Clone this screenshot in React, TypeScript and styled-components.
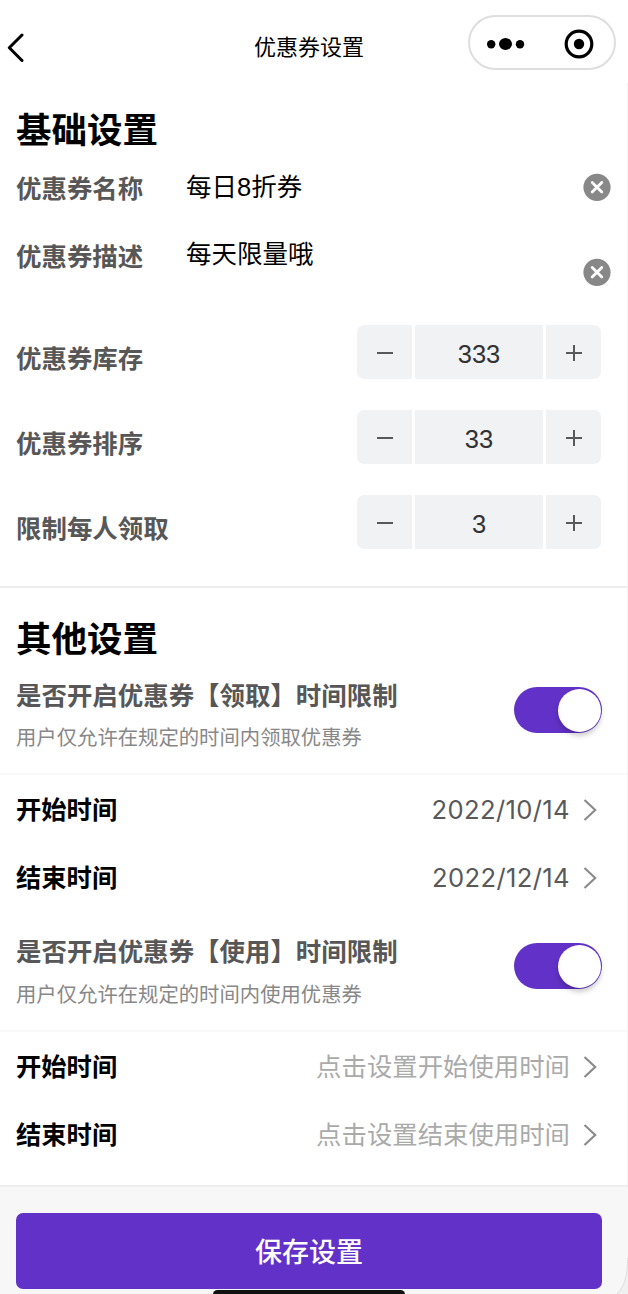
import React, { useState } from "react";
import styled, { createGlobalStyle } from "styled-components";

const GlobalStyle = createGlobalStyle`
  * { box-sizing: border-box; }
  body {
    margin: 0;
    background: #fff;
    color: #000;
    font-family: "Liberation Sans", "Noto Sans CJK SC", sans-serif;
  }
  button { font: inherit; border: 0; padding: 0; margin: 0; background: none; color: inherit; cursor: pointer; }
`;

const Page = styled.div`
  position: relative;
  width: 628px;
  height: 1294px;
  overflow: hidden;
  display: flex;
  flex-direction: column;
  background: #fff;
`;

const NavBar = styled.header`
  flex: none;
  height: 83px;
  display: grid;
  grid-template-columns: 148px 1fr 148px;
  align-items: start;
  padding: 15px 12px 0 7px;
`;

const BackButton = styled.button`
  width: 18px;
  height: 30px;
  margin-top: 18px;
  svg { display: block; }
`;

const NavTitle = styled.h1`
  margin: 16px 0 0 -5px;
  font-size: 22px;
  line-height: 34px;
  font-weight: 400;
  text-align: center;
`;

const Capsule = styled.div`
  width: 148px;
  height: 55px;
  border: 2px solid #dedede;
  border-radius: 28px;
  display: flex;
  align-items: center;
  justify-content: space-between;
  padding: 2px 20px 0 17px;
`;

const Panel = styled.section`
  flex: none;
  display: flex;
  flex-direction: column;
  border-right: 1px solid #f4f4f4;
`;

const BasicPanel = styled(Panel)`
  height: 505px;
  border-bottom: 2px solid #ededed;
`;

const OtherPanel = styled(Panel)`
  height: 597px;
`;

const Heading = styled.h2<{ $height: number; $top: number }>`
  margin: 0;
  padding: ${(p) => p.$top}px 0 0 16px;
  height: ${(p) => p.$height}px;
  font-size: 35.5px;
  line-height: 52px;
  font-weight: 700;
`;

const FieldRow = styled.div<{ $height: number }>`
  height: ${(p) => p.$height}px;
  display: flex;
  padding: 0 16px;
`;

const Label = styled.span<{ $top?: number }>`
  padding-top: ${(p) => p.$top ?? 0}px;
  width: 170px;
  font-size: 25.45px;
  line-height: 38px;
  font-weight: 700;
  color: #575757;
`;

const FieldValue = styled.span<{ $top: number }>`
  flex: 1;
  padding-top: ${(p) => p.$top}px;
  font-size: 25.5px;
  line-height: 38px;
`;

const ClearButton = styled.button<{ $top: number }>`
  width: 28px;
  height: 28px;
  margin-top: ${(p) => p.$top}px;
  svg { display: block; }
`;

const StepperRow = styled.div`
  height: 85px;
  display: flex;
  justify-content: space-between;
  padding: 15px 26px 0 16px;
`;

const Stepper = styled.div`
  width: 244px;
  height: 54px;
  display: grid;
  grid-template-columns: 55px 128px 55px;
  column-gap: 3px;
  border-radius: 7px;
  overflow: hidden;
`;

const StepCell = styled.div`
  display: flex;
  align-items: center;
  justify-content: center;
  background: #f1f2f4;
`;

const StepButton = styled(StepCell).attrs({ as: "button" })`
  padding-top: 2px;
  svg { display: block; }
`;

const StepValue = styled(StepCell)`
  padding-top: 5px;
  font-size: 25.5px;
  color: #323233;
`;

const SwitchRow = styled.div<{ $height: number; $top: number }>`
  height: ${(p) => p.$height}px;
  display: flex;
  justify-content: space-between;
  padding: ${(p) => p.$top}px 25px 0 16px;
  border-bottom: 2px solid #f8f8f8;
`;

const SwitchText = styled.div`
  display: flex;
  flex-direction: column;
`;

const SwitchTitle = styled.span`
  font-size: 25.45px;
  line-height: 38px;
  font-weight: 700;
  color: #575757;
`;

const SwitchHint = styled.span<{ $gap: number }>`
  margin-top: ${(p) => p.$gap}px;
  font-size: 20.35px;
  line-height: 30px;
  color: #888;
`;

const Track = styled.button<{ $on: boolean }>`
  width: 88px;
  height: 46px;
  margin-top: 10px;
  padding: 1.5px;
  border-radius: 23px;
  display: flex;
  justify-content: ${(p) => (p.$on ? "flex-end" : "flex-start")};
  background: ${(p) => (p.$on ? "#6231c8" : "#ddd")};
`;

const Knob = styled.span`
  width: 43px;
  height: 43px;
  border-radius: 50%;
  background: #fff;
  box-shadow: 0 4px 5px rgba(0, 0, 0, 0.2);
`;

const DateRow = styled.div`
  height: 68px;
  display: flex;
  align-items: center;
  padding: 2px 30px 0 16px;
`;

const DateLabel = styled.span`
  flex: 1;
  font-size: 25.3px;
  line-height: 38px;
  font-weight: 700;
`;

const DateValue = styled.span<{ $empty: boolean }>`
  margin-right: 13px;
  line-height: 38px;
  color: ${(p) => (p.$empty ? "#aaa" : "#595959")};
  font-family: ${(p) => (p.$empty ? "inherit" : '"Inter", "Liberation Sans", sans-serif')};
  font-size: ${(p) => (p.$empty ? 25.4 : 25.6)}px;
  letter-spacing: ${(p) => (p.$empty ? 0 : 0.35)}px;
`;

const Footer = styled.footer`
  flex: 1;
  border-top: 2px solid #eee;
  background: #f7f7f7;
  padding: 26px 26px 0 16px;
`;

const SaveButton = styled.button`
  width: 586px;
  height: 76px;
  border-radius: 7px;
  background: #6231c8;
  color: #fff;
  font-size: 27px;
  line-height: 76px;
  font-weight: 500;
  text-align: center;
  padding-top: 2px;
`;

const HomeIndicator = styled.div`
  position: absolute;
  left: 213px;
  bottom: -5px;
  width: 192px;
  height: 9px;
  border-radius: 5px;
  background: #111;
`;

const ScreenCorner = styled.svg`
  position: absolute;
  right: 0;
  bottom: 0;
`;

const ClearIcon = () => (
  <svg width="28" height="28" viewBox="0 0 28 28">
    <circle cx="14" cy="14.3" r="13.6" fill="#888" />
    <path d="M9.2 9.5l9.6 9.6M18.8 9.5l-9.6 9.6" stroke="#fff" strokeWidth="2.8" strokeLinecap="round" />
  </svg>
);

const StepIcon = ({ plus }: { plus?: boolean }) => (
  <svg width="16" height="16" viewBox="0 0 16 16" stroke="#58595b" strokeWidth="2">
    <path d={plus ? "M0 8h16M8 0v16" : "M0 8h16"} />
  </svg>
);

const Arrow = () => (
  <svg width="14" height="24" viewBox="0 0 14 24" fill="none" stroke="#8c8c8c" strokeWidth="2.2">
    <path d="M1.5 2L12.2 12L1.5 22" />
  </svg>
);

function StepperField({ label, initial }: { label: string; initial: number }) {
  const [value, setValue] = useState(initial);
  return (
    <StepperRow>
      <Label $top={15}>{label}</Label>
      <Stepper>
        <StepButton onClick={() => setValue(Math.max(0, value - 1))}><StepIcon /></StepButton>
        <StepValue>{value}</StepValue>
        <StepButton onClick={() => setValue(value + 1)}><StepIcon plus /></StepButton>
      </Stepper>
    </StepperRow>
  );
}

interface TextFieldProps {
  label: string;
  initial: string;
  height: number;
  valueTop: number;
  iconTop: number;
}

function TextField({ label, initial, height, valueTop, iconTop }: TextFieldProps) {
  const [value, setValue] = useState(initial);
  return (
    <FieldRow $height={height}>
      <Label $top={16}>{label}</Label>
      <FieldValue $top={valueTop}>{value}</FieldValue>
      <ClearButton $top={iconTop} onClick={() => setValue("")}><ClearIcon /></ClearButton>
    </FieldRow>
  );
}

function SwitchField(props: { title: string; hint: string; height: number; top: number; gap: number }) {
  const [on, setOn] = useState(true);
  return (
    <SwitchRow $height={props.height} $top={props.top}>
      <SwitchText>
        <SwitchTitle>{props.title}</SwitchTitle>
        <SwitchHint $gap={props.gap}>{props.hint}</SwitchHint>
      </SwitchText>
      <Track $on={on} onClick={() => setOn(!on)}><Knob /></Track>
    </SwitchRow>
  );
}

function DateField({ label, value, placeholder = "" }: { label: string; value?: string; placeholder?: string }) {
  return (
    <DateRow>
      <DateLabel>{label}</DateLabel>
      <DateValue $empty={!value}>{value ?? placeholder}</DateValue>
      <Arrow />
    </DateRow>
  );
}

export default function App() {
  return (
    <>
      <GlobalStyle />
      <Page>
        <NavBar>
          <BackButton>
            <svg width="18" height="30" viewBox="0 0 18 30" fill="none" stroke="#000" strokeWidth="3" strokeLinecap="round" strokeLinejoin="round">
              <path d="M15 2L2.3 14.8L15 27.5" />
            </svg>
          </BackButton>
          <NavTitle>优惠券设置</NavTitle>
          <Capsule>
            <svg width="38" height="14" viewBox="0 0 38 14">
              <circle cx="4.2" cy="7.3" r="4.2" />
              <ellipse cx="18.5" cy="7" rx="6.5" ry="6" />
              <circle cx="33" cy="7.3" r="4.2" />
            </svg>
            <svg width="30" height="30" viewBox="0 0 30 30">
              <circle cx="15" cy="15" r="12.8" fill="none" stroke="#000" strokeWidth="3.2" />
              <circle cx="15" cy="15" r="5.2" />
            </svg>
          </Capsule>
        </NavBar>
        <BasicPanel>
          <Heading $height={71} $top={22}>基础设置</Heading>
          <TextField label="优惠券名称" initial="每日8折券" height={68} valueTop={14} iconTop={19} />
          <TextField label="优惠券描述" initial="每天限量哦" height={88} valueTop={13} iconTop={36} />
          <StepperField label="优惠券库存" initial={333} />
          <StepperField label="优惠券排序" initial={33} />
          <StepperField label="限制每人领取" initial={3} />
        </BasicPanel>
        <OtherPanel>
          <Heading $height={89} $top={26}>其他设置</Heading>
          <SwitchField title="是否开启优惠券【领取】时间限制" hint="用户仅允许在规定的时间内领取优惠券" height={98} top={0} gap={8} />
          <DateField label="开始时间" value="2022/10/14" />
          <DateField label="结束时间" value="2022/12/14" />
          <SwitchField title="是否开启优惠券【使用】时间限制" hint="用户仅允许在规定的时间内使用优惠券" height={121} top={22} gap={9} />
          <DateField label="开始时间" placeholder="点击设置开始使用时间" />
          <DateField label="结束时间" placeholder="点击设置结束使用时间" />
        </OtherPanel>
        <Footer>
          <SaveButton>保存设置</SaveButton>
        </Footer>
        <ScreenCorner width="12" height="40" viewBox="0 0 12 40">
          <path d="M12 4C12 20 9 32 1 40H12Z" fill="#f0f0f0" />
          <path d="M11.7 4C11.5 20 9 32 1 40" fill="none" stroke="#dedede" />
        </ScreenCorner>
        <HomeIndicator />
      </Page>
    </>
  );
}
